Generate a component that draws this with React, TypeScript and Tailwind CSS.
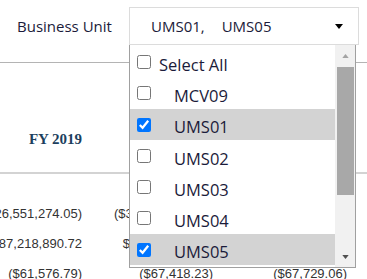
import React from 'react';

const ITEMS: { label: string; checked: boolean; header?: boolean }[] = [
  { label: 'Select All', checked: false, header: true },
  { label: 'MCV09', checked: false },
  { label: 'UMS01', checked: true },
  { label: 'UMS02', checked: false },
  { label: 'UMS03', checked: false },
  { label: 'UMS04', checked: false },
  { label: 'UMS05', checked: true },
];

const ROWS = [
  ['($26,551,274.05)', '($37,264,889.14)', '($38,102,551.20)'],
  ['$87,218,890.72', '$91,403,227.58', '$93,876,104.33'],
  ['($61,576.79)', '($67,418.23)', '($67,729.06)'],
];

function Caret({ up, className }: { up?: boolean; className?: string }) {
  return (
    <svg width="8" height="5" viewBox="0 0 8 5" className={className}>
      <polygon points={up ? '0,5 8,5 4,0' : '0,0 8,0 4,5'} fill="currentColor" />
    </svg>
  );
}

function DropdownList() {
  return (
    <div className="absolute left-[129px] top-[45px] w-[227px] h-[223px] bg-white border border-t-0 border-[#a0a0a0] flex">
      <div className="flex-1 overflow-hidden pt-[1px]">
        {ITEMS.map((it) => (
          <div
            key={it.label}
            className={`h-[31.25px] flex items-center pl-[7px] ${it.checked ? 'bg-[#d3d3d3]' : ''}`}
          >
            <input
              type="checkbox"
              readOnly
              checked={it.checked}
              className="w-[14px] h-[14px] shrink-0 mt-[1px]"
            />
            <span
              className={`text-[16.5px] leading-none text-[#1b1b3a] pt-[7px] ${it.header ? 'ml-[8px]' : 'ml-[23px]'}`}
            >
              {it.label}
            </span>
          </div>
        ))}
      </div>
      <div className="w-[20px] bg-[#f1f1f1] flex flex-col items-center">
        <div className="h-[22px] flex items-center justify-center text-[#a3a3a3]">
          <Caret up className="w-[7px] h-[4px]" />
        </div>
        <div className="w-[17px] h-[128px] bg-[#a8a8a8]" />
        <div className="flex-1" />
        <div className="h-[20px] flex items-center justify-center text-[#505050]">
          <Caret className="w-[7px] h-[4px]" />
        </div>
      </div>
    </div>
  );
}

export default function App() {
  return (
    <div
      className="relative w-[367px] h-[279px] overflow-hidden bg-white"
      style={{ fontFamily: '"Open Sans", "Noto Sans", sans-serif' }}
    >
      <div className="h-[63px] border-b border-[#b4b4b4] pt-[7px]">
        <div className="flex items-center">
          <span className="w-[129px] pl-[17px] text-[15px] text-[#1b1b3a]">Business Unit</span>
          <div className="w-[230px] h-[38px] border border-[#dcdcdc] flex items-center pl-[21px] pr-[14px] text-[15px] text-[#1b1b3a]">
            <span>UMS01,</span>
            <span className="ml-[17px]">UMS05</span>
            <Caret className="ml-auto w-[10px] h-[5px] text-black" />
          </div>
        </div>
      </div>

      <div className="h-[111px] border-b-2 border-[#d3d3d3] flex items-end pb-[25px]">
        <div
          className="w-[111px] text-center font-bold text-[15px] leading-none text-[#1c3f5e]"
          style={{ fontFamily: '"Liberation Serif", serif' }}
        >
          FY 2019
        </div>
      </div>

      <div className="pt-[30px]" style={{ fontFamily: '"Liberation Sans", Arial, sans-serif' }}>
        {ROWS.map((r, i) => (
          <div key={i} className="h-[30px] flex text-[13px] text-[#333]">
            <div className="w-[82px] flex justify-end whitespace-nowrap">{r[0]}</div>
            <div className="w-[131px] flex justify-end whitespace-nowrap">{r[1]}</div>
            <div className="w-[134px] flex justify-end whitespace-nowrap">{r[2]}</div>
          </div>
        ))}
      </div>

      <DropdownList />
    </div>
  );
}
